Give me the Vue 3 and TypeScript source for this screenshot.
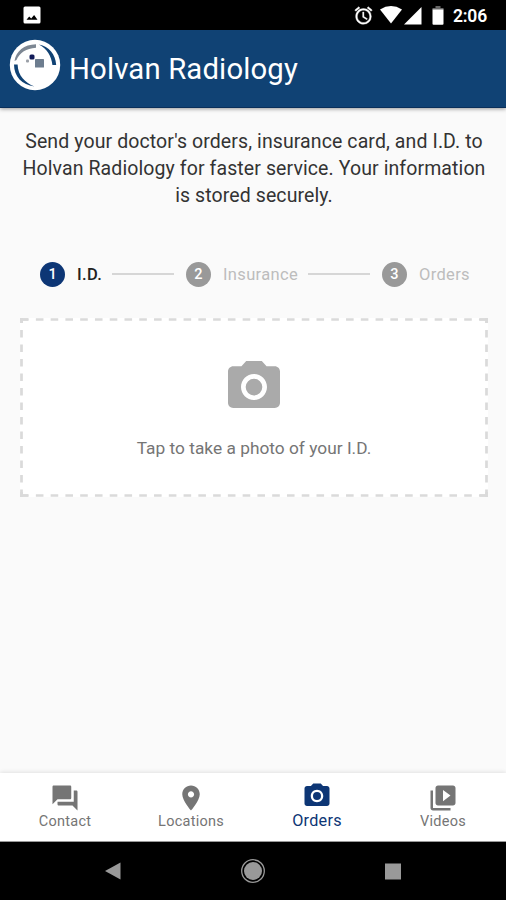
<script setup lang="ts">
import { ref } from 'vue'

interface Step { id: number; label: string }
interface Tab { label: string; path: string }

const CAMERA = 'M9 2L7.17 4H4c-1.1 0-2 .9-2 2v12c0 1.1.9 2 2 2h16c1.1 0 2-.9 2-2V6c0-1.1-.9-2-2-2h-3.17L15 2H9zm3 15c-2.76 0-5-2.24-5-5s2.24-5 5-5 5 2.24 5 5-2.24 5-5 5zM12 8.8a3.2 3.2 0 1 0 0 6.4 3.2 3.2 0 0 0 0-6.4z'

const steps: Step[] = [
  { id: 1, label: 'I.D.' },
  { id: 2, label: 'Insurance' },
  { id: 3, label: 'Orders' },
]
const tabs: Tab[] = [
  { label: 'Contact', path: 'M21 6h-2v9H6v2c0 .55.45 1 1 1h11l4 4V7c0-.55-.45-1-1-1zm-4 6V3c0-.55-.45-1-1-1H3c-.55 0-1 .45-1 1v14l4-4h10c.55 0 1-.45 1-1z' },
  { label: 'Locations', path: 'M12 2C8.13 2 5 5.13 5 9c0 5.25 7 13 7 13s7-7.75 7-13c0-3.87-3.13-7-7-7zm0 9.5c-1.38 0-2.5-1.12-2.5-2.5s1.12-2.5 2.5-2.5 2.5 1.12 2.5 2.5-1.12 2.5-2.5 2.5z' },
  { label: 'Orders', path: CAMERA },
  { label: 'Videos', path: 'M4 6H2v14c0 1.1.9 2 2 2h14v-2H4V6zm16-4H8c-1.1 0-2 .9-2 2v12c0 1.1.9 2 2 2h12c1.1 0 2-.9 2-2V4c0-1.1-.9-2-2-2zm-8 12.5v-9l6 4.5-6 4.5z' },
]
const currentStep = ref(1)
const currentTab = ref('Orders')
</script>

<template>
  <div class="screen">
    <div class="status">
      <svg class="picture" viewBox="0 0 18 18">
        <rect x=".5" y=".5" width="17" height="17" rx="1.500" fill="#fff" />
        <path d="M3.500 13.700l2.700-3.200 2 1.900 2.900-3.400 3.400 4.700z" fill="#000" />
      </svg>
      <div class="status-right">
        <svg class="alarm" viewBox="0 0 24 24"><path fill="#fff" stroke="#fff" stroke-width=".4" d="M22 5.72l-4.6-3.86-1.29 1.53 4.6 3.86L22 5.72zM7.88 3.39L6.6 1.86 2 5.71l1.29 1.53 4.59-3.85zM12.5 8H11v6l4.75 2.85.75-1.23-4-2.37V8zM12 4c-4.97 0-9 4.03-9 9s4.02 9 9 9a9 9 0 0 0 0-18zm0 16c-3.87 0-7-3.13-7-7s3.13-7 7-7 7 3.13 7 7-3.13 7-7 7z" /></svg>
        <svg class="wifi" viewBox="0 0 22 18"><path fill="#fff" d="M0 3.4Q11-3.2 22 3.4L11 17.6z" /></svg>
        <svg class="signal" viewBox="0 0 18 18"><path fill="#fff" d="M0 17.5L17.5 0v17.5z" /></svg>
        <svg class="battery" viewBox="0 0 12 19"><path fill="#666" d="M3.500 0h5v2H11.500v2H.500V2h3z" /><path fill="#fff" d="M.500 3.600h11v14.200q0 1-1 1h-9q-1 0-1-1z" /></svg>
        <span class="clock">2:06</span>
      </div>
    </div>

    <header class="bar">
      <svg class="logo" viewBox="0 0 52 52">
        <circle cx="26" cy="26" r="25.2" fill="#fff" />
        <path d="M5.500 22C7 12 15 5.500 27 5.200v3.600C17 9.500 11 13.500 7.500 21z" fill="#7d8793" />
        <path d="M30 5.500C40 7.500 46.500 15 47.200 26h-3.800C42.500 17 38 10 30 5.500z" fill="#104274" />
        <path d="M5 25.500c0 12 8 20.500 20.500 22C16 43.500 9 37 8.600 25.500z" fill="#104274" />
        <rect x="20.500" y="15.500" width="5" height="5" rx="1.500" fill="#111b59" />
        <rect x="26" y="20" width="9" height="8.500" rx=".6" fill="#6d7d8f" />
        <rect x="17" y="20.500" width="3" height="3" rx="1" fill="#9a9fa7" />
      </svg>
      <h1>Holvan Radiology</h1>
    </header>

    <main>
      <p class="intro">Send your doctor's orders, insurance card, and I.D. to<br>Holvan Radiology for faster service. Your information<br>is stored securely.</p>
      <div class="steps">
        <template v-for="step in steps" :key="step.id">
          <span v-if="step.id > 1" class="connector"></span>
          <div class="step" :class="{ active: step.id === currentStep }" @click="currentStep = step.id">
            <span class="dot">{{ step.id }}</span>
            <span class="step-label">{{ step.label }}</span>
          </div>
        </template>
      </div>
      <button class="capture" type="button">
        <svg class="outline" viewBox="0 0 468 179">
          <path d="M0 1.500H468M0 177.500H468" stroke-dasharray="7.600 7.170" stroke-dashoffset="-1.100" />
          <path d="M1.500 0V179M466.500 0V179" stroke-dasharray="7.600 6.900" stroke-dashoffset="-12" />
          <path d="M0 1.500H8M460 1.500h8M0 177.500h8M460 177.500h8M1.500 0v5M466.500 0v5M1.500 174v5M466.500 174v5" />
        </svg>
        <svg class="camera" viewBox="2 2 20 18"><path :d="CAMERA" /></svg>
        <span class="hint">Tap to take a photo of your I.D.</span>
      </button>
    </main>

    <nav class="tabs">
      <button v-for="tab in tabs" :key="tab.label" type="button" class="tab" :class="{ active: tab.label === currentTab }" @click="currentTab = tab.label">
        <svg viewBox="0 0 24 24"><path :d="tab.path" /></svg>
        <span>{{ tab.label }}</span>
      </button>
    </nav>

    <div class="system">
      <svg viewBox="0 0 24 24"><path d="M4 12L19.500 3.500v17z" /></svg>
      <svg viewBox="0 0 24 24"><circle cx="12" cy="12" r="11.300" fill="none" stroke="#999" stroke-width="1.300" /><circle cx="12" cy="12" r="9" /></svg>
      <svg viewBox="0 0 24 24"><rect x="4" y="4.500" width="16" height="16" /></svg>
    </div>
  </div>
</template>

<style>
body { margin: 0; }
</style>

<style scoped>
.screen { width: 506px; height: 900px; display: flex; flex-direction: column; background: #fafafa; font-family: Roboto, "Liberation Sans", sans-serif; overflow: hidden; }
svg { display: block; flex: none; }
button { border: 0; padding: 0; margin: 0; font: inherit; }
.status { height: 30px; flex: none; background: #000; display: flex; justify-content: space-between; padding: 0 18px 0 23px; box-sizing: border-box; }
.picture { width: 18px; height: 18px; margin-top: 6px; }
.status-right { display: flex; align-items: flex-start; }
.alarm { width: 21px; height: 21px; margin: 5px 6px 0 0; }
.wifi { width: 22px; height: 18px; margin: 6px 2px 0 0; }
.signal { width: 18px; height: 18px; margin: 7px 10px 0 0; }
.battery { width: 12px; height: 19px; margin: 6px 9px 0 0; }
.clock { color: #fff; font-size: 17.500px; font-weight: 600; line-height: 33px; width: 35px; white-space: nowrap; letter-spacing: -.2px; }
.bar { height: 78px; flex: none; background: #104274; display: flex; border-bottom: 1px solid #0a2f5a; box-sizing: border-box; padding-left: 9px; box-shadow: 0 1px 4px rgba(0,0,0,.4); }
.logo { width: 52px; height: 52px; margin-top: 9px; }
h1 { margin: 21px 0 0 8px; font-size: 29.300px; line-height: 37px; font-weight: 400; color: #fff; white-space: nowrap; letter-spacing: .15px; }
main { flex: 1; padding: 0 18px 0 20px; }
.intro { margin: 20px -18px 0; text-align: center; font-size: 19.500px; line-height: 27px; color: #333; letter-spacing: .1px; white-space: nowrap; }
.steps { display: flex; align-items: center; height: 26px; margin: 52px 0 0 20px; width: 430px; }
.step { display: flex; align-items: center; }
.dot { width: 25px; height: 25px; border-radius: 50%; background: #999; color: #fff; font-size: 14.500px; font-weight: 500; line-height: 25px; text-align: center; }
.step-label { margin-left: 12px; color: #bdbdbd; font-size: 16.500px; letter-spacing: .35px; white-space: nowrap; }
.active .dot { background: #0d3675; }
.active .step-label { color: #222; font-weight: 500; }
.connector { flex: 1; height: 2px; background: #d6d6d6; margin: 0 12px 0 10px; }
.capture { width: 468px; height: 179px; margin-top: 31px; display: flex; flex-direction: column; align-items: center; position: relative; background: #fff; cursor: pointer; }
.outline { position: absolute; inset: 0; width: 468px; height: 179px; fill: none; stroke: #dadada; stroke-width: 2.700; }
.camera { width: 52px; height: 47px; margin-top: 43px; fill: #aaa; }
.hint { margin-top: 28px; font-size: 17.300px; line-height: 24px; color: #757575; letter-spacing: .02px; white-space: nowrap; }
.tabs { height: 69px; flex: none; display: flex; background: #fff; border-bottom: 1px solid #999; box-sizing: border-box; box-shadow: 0 -1px 4px rgba(0,0,0,.1); padding-left: 2px; }
.tab { flex: 1; background: none; display: flex; flex-direction: column; align-items: center; color: #757575; font-size: 14.500px; line-height: 18px; letter-spacing: .25px; }
.tab svg { width: 30px; height: 30px; margin-top: 10px; fill: currentColor; }
.tab.active { color: #0d3675; font-size: 16.200px; }
.tab.active svg { margin-top: 8px; margin-bottom: 1px; }
.system { height: 58px; flex: none; background: #000; display: flex; justify-content: center; align-items: center; gap: 116px; fill: #999; }
.system svg { width: 24px; height: 24px; }
</style>
